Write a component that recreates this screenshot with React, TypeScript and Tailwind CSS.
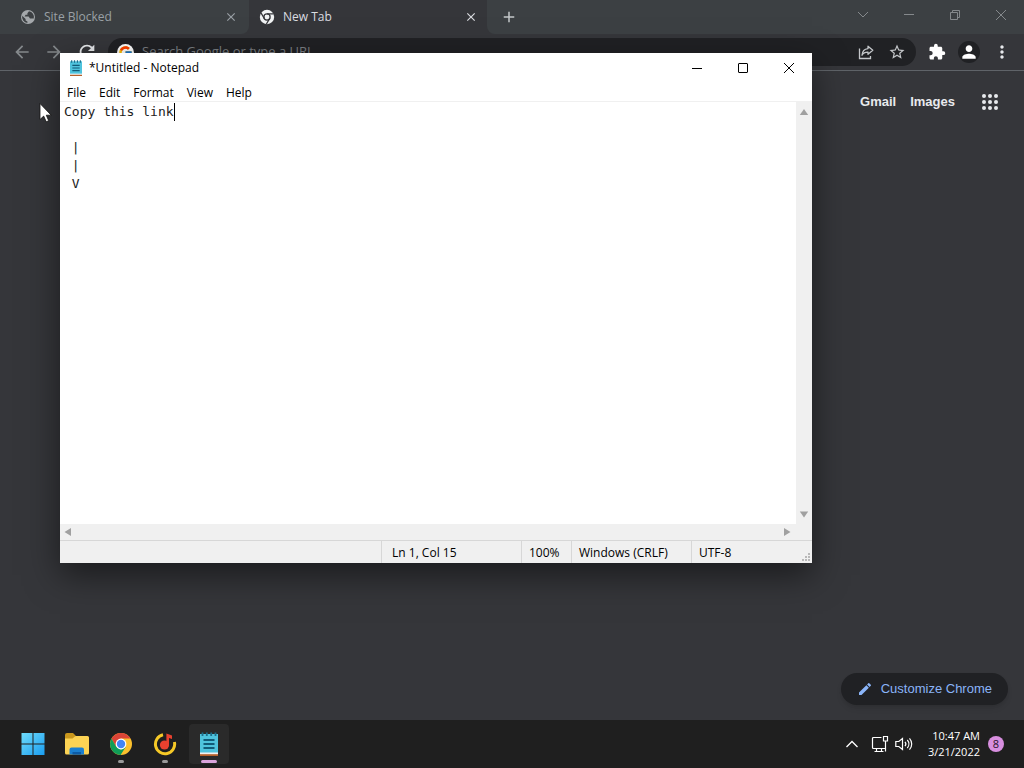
import { useState, type ChangeEvent } from 'react'
import { FcGoogle } from 'react-icons/fc'
import {
  MdAdd,
  MdArrowBack,
  MdArrowForward,
  MdClose,
  MdEdit,
  MdExtension,
  MdMoreVert,
  MdPerson,
  MdRefresh,
  MdStarBorder,
} from 'react-icons/md'

const INITIAL_TEXT = 'Copy this link\n\n |\n |\n V'
const MENUS = ['File', 'Edit', 'Format', 'View', 'Help']

function GlobeIcon() {
  return (
    <svg width="16" height="16" viewBox="0 0 16 16" fill="none" aria-hidden="true">
      <circle cx="8" cy="8" r="7" fill="#a4a8ab" />
      <path d="M9 2.2 7.400 4.200v1.600H5.600L4.600 7.600H8.600L10 9.400h3.800A6 6 0 0 0 9 2.200ZM2.200 6.800 5.600 10v1.400l1.800 1v1.600A6 6 0 0 1 2.200 6.800Z" fill="#3c4043" />
    </svg>
  )
}

function ChromeMono() {
  return (
    <svg width="16" height="16" viewBox="0 0 16 16" fill="none" aria-hidden="true">
      <circle cx="8" cy="8" r="7.2" fill="#f1f3f4" />
      <circle cx="8" cy="8" r="3.1" fill="#f1f3f4" stroke="#35363a" strokeWidth="1.3" />
      <path d="M8 4.9h6.6M5.3 9.5 2 3.9M10.7 9.5 7.4 15" stroke="#35363a" strokeWidth="1.3" />
    </svg>
  )
}

function ChromeLogo() {
  return (
    <svg width="24" height="24" viewBox="0 0 24 24" aria-hidden="true">
      <circle cx="12" cy="12" r="11" fill="#fbc02d" />
      <path d="M2.5 6.5A11 11 0 0 1 21.5 6.5H12L7.2 14.8Z" fill="#db4437" />
      <path d="M2.5 6.5A11 11 0 0 0 11.6 23L16.8 14.8 12 17.5 7.2 14.8Z" fill="#0f9d58" />
      <circle cx="12" cy="12" r="5.4" fill="#fff" />
      <circle cx="12" cy="12" r="4.2" fill="#4285f4" />
    </svg>
  )
}

function WindowsLogo() {
  return (
    <svg width="24" height="24" viewBox="0 0 24 24" aria-hidden="true">
      <defs>
        <linearGradient id="win" x1="0" y1="0" x2="1" y2="1">
          <stop offset="0" stopColor="#6fdcfb" />
          <stop offset="1" stopColor="#1a9df0" />
        </linearGradient>
      </defs>
      <path d="M0.500 1h11v10.500h-11zM12.500 1h11v10.500h-11zM0.500 12.500h11V23h-11zM12.500 12.500h11V23h-11z" fill="url(#win)" />
    </svg>
  )
}

function FolderIcon() {
  return (
    <svg width="26" height="24" viewBox="0 0 26 24" aria-hidden="true">
      <path d="M1 3a2 2 0 0 1 2-2h6l2.500 2.500V8H1z" fill="#c9971d" />
      <path d="M1 6.500h7.500L11.500 4H23.500a1.500 1.500 0 0 1 1.500 1.500V21a1.500 1.500 0 0 1-1.500 1.500h-21A1.500 1.500 0 0 1 1 21z" fill="#fcd354" />
      <path d="M5.500 22.500v-5A2 2 0 0 1 7.500 15.500h10.500a2 2 0 0 1 2 2v5z" fill="#1a7fd0" />
      <path d="M8.500 22.500v-2.500h8.500v2.500z" fill="#0d5ba5" />
    </svg>
  )
}

function MusicIcon() {
  return (
    <svg width="24" height="24" viewBox="0 0 24 24" fill="none" aria-hidden="true">
      <path d="M10 2.8A9.6 9.6 0 1 0 21.4 10" stroke="#f6c927" strokeWidth="3" />
      <circle cx="11.5" cy="13" r="4.6" fill="#e8412f" />
      <path d="M13.4 13V1.5l5.6 2v3.4l-3-1V13z" fill="#e8412f" />
    </svg>
  )
}

function NotepadIcon({ size }: { size: number }) {
  return (
    <svg width={size} height={size} viewBox="0 0 24 24" aria-hidden="true">
      <path d="M3 20h18v3H3z" fill="#f1f1f1" />
      <path d="M3 22.200h18V24H3z" fill="#b5602a" />
      <path d="M3 2h18v18.500H3z" fill="#4fc3dd" />
      <path d="M5.5 0.500v3.500M9.8 0.500v3.500M14.2 0.500v3.500M18.5 0.500v3.500" stroke="#1c6f8c" strokeWidth="1.8" />
      <path d="M6.5 8h11M6.5 12h11M6.5 16h11" stroke="#125b78" strokeWidth="1.8" />
    </svg>
  )
}

function ShareIcon() {
  return (
    <svg width="16" height="16" viewBox="0 0 16 16" fill="none" stroke="#c4c7ca" strokeWidth="1.3" aria-hidden="true">
      <path d="M1.500 4.500v10h11V12" />
      <path d="M10 2.2 14.8 6.3 10 10.3V8.1C7 8 5.2 9 4 11.2 4.3 7.5 6.3 5 10 4.6Z" strokeLinejoin="round" />
    </svg>
  )
}

function TabStrip() {
  return (
    <div className="flex h-[34px] shrink-0 bg-[#35363a] text-xs">
      <div className="flex w-[249px] items-center gap-2 rounded-br-lg bg-[#3c4043] pl-5 pr-[11px] text-[#9aa0a6]">
        <GlobeIcon />
        <span className="flex-1">Site Blocked</span>
        <button aria-label="Close Site Blocked"><MdClose size={14} /></button>
      </div>
      <div className="flex w-[238px] items-center gap-2 pl-[10px] pr-[9px] text-[#dadce0]">
        <ChromeMono />
        <span className="flex-1">New Tab</span>
        <button aria-label="Close New Tab"><MdClose size={14} /></button>
      </div>
      <div className="flex flex-1 items-center justify-between rounded-bl-lg bg-[#3c4043]">
        <button aria-label="New tab" className="ml-[13px] text-[#c4c7ca]"><MdAdd size={18} /></button>
        <div className="flex items-center pb-1 text-[#85898c]">
          <button aria-label="Search tabs" className="flex w-[46px] justify-center">
            <svg width="12" height="12" viewBox="0 0 12 12" fill="none" stroke="currentColor"><path d="m1 3 5 5 5-5" /></svg>
          </button>
          <button aria-label="Minimize Chrome" className="flex w-[46px] justify-center">
            <svg width="12" height="12" viewBox="0 0 12 12" fill="none" stroke="currentColor"><path d="M1 5.500h10" /></svg>
          </button>
          <button aria-label="Restore Chrome" className="flex w-[46px] justify-center">
            <svg width="12" height="12" viewBox="0 0 12 12" fill="none" stroke="currentColor"><path d="M1.500 3.500h7v7h-7zM3.500 3.500v-2h7v7h-2" /></svg>
          </button>
          <button aria-label="Close Chrome" className="flex w-[46px] justify-center">
            <svg width="12" height="12" viewBox="0 0 12 12" fill="none" stroke="currentColor"><path d="m1 1 10 10M11 1 1 11" /></svg>
          </button>
        </div>
      </div>
    </div>
  )
}

function Toolbar() {
  return (
    <div className="flex h-[37px] shrink-0 items-center border-b border-[#5f6368] bg-[#35363a] px-3">
      <button aria-label="Back" className="text-[#85898c]"><MdArrowBack size={20} /></button>
      <button aria-label="Forward" className="ml-3 text-[#85898c]"><MdArrowForward size={20} /></button>
      <button aria-label="Reload" className="ml-3 text-[#e8eaed]"><MdRefresh size={22} /></button>
      <div className="ml-[10px] flex h-7 flex-1 items-center gap-2 rounded-full bg-[#202124] pl-[9px] pr-[10px]">
        <span className="rounded-full bg-white p-px"><FcGoogle size={15} /></span>
        <input
          aria-label="Address bar"
          placeholder="Search Google or type a URL"
          className="min-w-0 flex-1 bg-transparent text-[13px] text-white outline-none placeholder:text-[#7b7f83]"
        />
        <button aria-label="Share"><ShareIcon /></button>
        <button aria-label="Bookmark" className="ml-[6px] text-[#c4c7ca]"><MdStarBorder size={18} /></button>
      </div>
      <button aria-label="Extensions" className="ml-3 text-white"><MdExtension size={18} /></button>
      <button aria-label="Profile" className="ml-3 rounded-full bg-[#202124] p-px text-white"><MdPerson size={20} /></button>
      <button aria-label="Chrome menu" className="ml-3 text-[#e8eaed]"><MdMoreVert size={20} /></button>
    </div>
  )
}

function NewTabPage() {
  return (
    <main className="flex flex-1 flex-col items-end justify-between bg-[#35363a] px-4 pb-[15px] pt-[14px] font-['Liberation_Sans',sans-serif] text-[13px]">
      <nav className="flex items-center pr-[9px] font-bold text-[#e8eaed]">
        <a href="#gmail">Gmail</a>
        <a href="#images" className="ml-[14px]">Images</a>
        <button aria-label="Google apps" className="ml-[26px] py-2">
          <svg width="18" height="18" viewBox="0 0 18 18" fill="currentColor" aria-hidden="true">
            {[3, 9, 15].map((y) => [3, 9, 15].map((x) => <circle key={`${x}-${y}`} cx={x} cy={y} r="2" />))}
          </svg>
        </button>
      </nav>
      <button className="flex h-8 items-center gap-2 rounded-full bg-[#202124] px-4 font-medium text-[#8ab4f8] shadow-md">
        <MdEdit size={16} />
        Customize Chrome
      </button>
    </main>
  )
}

function Notepad() {
  const [text, setText] = useState(INITIAL_TEXT)
  const [caret, setCaret] = useState({ line: 1, col: 15 })

  function onChange(e: ChangeEvent<HTMLTextAreaElement>) {
    const before = e.target.value.slice(0, e.target.selectionStart).split('\n')
    setText(e.target.value)
    setCaret({ line: before.length, col: before[before.length - 1].length + 1 })
  }

  return (
    <section className="absolute bottom-[205px] left-[60px] right-[212px] top-[53px] flex flex-col bg-white font-['Open_Sans',sans-serif] text-xs text-black shadow-[0_12px_32px_rgba(0,0,0,0.5)]">
      <header className="flex h-[29px] shrink-0 items-center pl-2">
        <NotepadIcon size={16} />
        <h1 className="ml-[5px] flex-1">*Untitled - Notepad</h1>
        <button aria-label="Minimize" className="flex w-[46px] justify-center">
          <svg width="12" height="12" viewBox="0 0 12 12" fill="none" stroke="currentColor"><path d="M1 6.500h10" /></svg>
        </button>
        <button aria-label="Maximize" className="flex w-[46px] justify-center">
          <svg width="12" height="12" viewBox="0 0 12 12" fill="none" stroke="currentColor"><rect x="1.500" y="1.500" width="9" height="9" rx="0.5" /></svg>
        </button>
        <button aria-label="Close" className="flex w-[46px] justify-center">
          <svg width="12" height="12" viewBox="0 0 12 12" fill="none" stroke="currentColor"><path d="m1 1 10 10M11 1 1 11" /></svg>
        </button>
      </header>
      <nav className="flex h-5 shrink-0 items-end gap-[13px] border-b border-[#f0f0f0] pl-[7px]">
        {MENUS.map((m) => (
          <button key={m}>{m}</button>
        ))}
      </nav>
      <div className="flex min-h-0 flex-1">
        <div className="relative flex-1 font-['DejaVu_Sans_Mono',monospace] text-[13px] leading-[18px]">
          <textarea
            aria-label="Text editor"
            value={text}
            onChange={onChange}
            spellCheck={false}
            className="block h-full w-full resize-none overflow-hidden bg-white px-1 py-px text-[#222] caret-transparent outline-none"
          />
          <span
            className="absolute h-[18px] w-px bg-black"
            style={{ left: `calc(4px + ${caret.col - 1}ch)`, top: 1 + (caret.line - 1) * 18 }}
          />
        </div>
        <div className="flex w-4 flex-col items-center justify-between bg-[#f0f0f0] py-[6px] text-[#a0a0a0]">
          <button aria-label="Scroll up"><svg width="10" height="8" viewBox="0 0 10 8" fill="currentColor"><path d="M5 1 9.200 7H0.800z" /></svg></button>
          <button aria-label="Scroll down"><svg width="10" height="8" viewBox="0 0 10 8" fill="currentColor"><path d="M5 7.500 0.800 1.500h8.400z" /></svg></button>
        </div>
      </div>
      <div className="flex h-4 shrink-0 items-center justify-between bg-[#f0f0f0] pl-1 pr-[21px] text-[#a0a0a0]">
        <button aria-label="Scroll left"><svg width="8" height="10" viewBox="0 0 8 10" fill="currentColor"><path d="M0.500 5 7 1v8z" /></svg></button>
        <button aria-label="Scroll right"><svg width="8" height="10" viewBox="0 0 8 10" fill="currentColor"><path d="M7.500 5 1 1v8z" /></svg></button>
      </div>
      <footer className="flex h-[23px] shrink-0 items-stretch border-t border-[#d7d7d7] bg-[#f0f0f0] leading-6">
        <span className="flex-1" />
        <span className="w-[140px] border-l border-[#d7d7d7] pl-[10px]">Ln {caret.line}, Col {caret.col}</span>
        <span className="w-[50px] border-l border-[#d7d7d7] pl-[7px]">100%</span>
        <span className="w-[120px] border-l border-[#d7d7d7] pl-[7px]">Windows (CRLF)</span>
        <span className="flex w-[121px] justify-between border-l border-[#d7d7d7] pl-[7px]">
          UTF-8
          <svg className="self-end" width="12" height="12" viewBox="0 0 12 12" fill="#b8b8b8" aria-hidden="true">
            <path d="M8 2h2v2H8zM5 5h2v2H5zM8 5h2v2H8zM2 8h2v2H2zM5 8h2v2H5zM8 8h2v2H8z" />
          </svg>
        </span>
      </footer>
    </section>
  )
}

function Taskbar() {
  return (
    <footer className="flex h-12 shrink-0 items-center bg-[#1f1f1f] pl-[13px] text-white">
      <div className="flex gap-1">
        <button aria-label="Start" className="flex size-10 items-center justify-center"><WindowsLogo /></button>
        <button aria-label="File Explorer" className="flex size-10 items-center justify-center"><FolderIcon /></button>
        <button aria-label="Google Chrome" className="relative flex size-10 items-center justify-center">
          <ChromeLogo />
          <span className="absolute bottom-px h-[3px] w-[6px] rounded-full bg-[#9a9a9a]" />
        </button>
        <button aria-label="Music" className="relative flex size-10 items-center justify-center">
          <MusicIcon />
          <span className="absolute bottom-px h-[3px] w-[6px] rounded-full bg-[#9a9a9a]" />
        </button>
        <button aria-label="Notepad" className="relative flex size-10 items-center justify-center rounded bg-[#2a2a2a]">
          <NotepadIcon size={24} />
          <span className="absolute bottom-px h-[3px] w-4 rounded-full bg-[#dba4dc]" />
        </button>
      </div>
      <div className="ml-auto flex items-center pr-5 font-['Open_Sans',sans-serif] text-[11px] leading-4">
        <button aria-label="Show hidden icons">
          <svg width="14" height="14" viewBox="0 0 14 14" fill="none" stroke="currentColor" strokeWidth="1.300"><path d="m1.500 10 5.500-5.500 5.500 5.500" /></svg>
        </button>
        <button aria-label="Network" className="ml-3">
          <svg width="18" height="18" viewBox="0 0 18 18" fill="none" stroke="currentColor" strokeWidth="1.200">
            <path d="M10.500 2.500h-8a1 1 0 0 0-1 1v9a1 1 0 0 0 1 1H14M5.500 13.500v3M10.500 13.500v3M3.500 16.500h9M12.500 1.500h4V6h-4zM14.500 6v10.500" />
          </svg>
        </button>
        <button aria-label="Volume" className="ml-[6px]">
          <svg width="18" height="16" viewBox="0 0 18 16" fill="none" stroke="currentColor" strokeWidth="1.200">
            <path d="M0.800 5.500v5h3L7.500 13.500v-11L3.800 5.500zM10 5.800a3.500 3.500 0 0 1 0 4.400M12.300 4a6 6 0 0 1 0 8M14.500 2.300a8.500 8.500 0 0 1 0 11.400" />
          </svg>
        </button>
        <div className="ml-[15px] text-right">
          <div>10:47 AM</div>
          <div>3/21/2022</div>
        </div>
        <span className="ml-2 flex size-4 items-center justify-center rounded-full bg-[#d88fdf] text-[#26122a]">8</span>
      </div>
    </footer>
  )
}

export default function App() {
  return (
    <div className="relative flex h-screen flex-col overflow-hidden font-['Open_Sans',sans-serif]">
      <TabStrip />
      <Toolbar />
      <NewTabPage />
      <Taskbar />
      <Notepad />
      {/* Mouse pointer */}
      <svg className="absolute left-[39px] top-[102px]" width="13" height="21" viewBox="0 0 13 21" aria-hidden="true">
        <path d="M1 1.500v16l3.700-3.400 2.500 5.700 2.500-1.100-2.400-5.500h4.900z" fill="#fff" stroke="#111" strokeWidth="0.800" />
      </svg>
    </div>
  )
}
